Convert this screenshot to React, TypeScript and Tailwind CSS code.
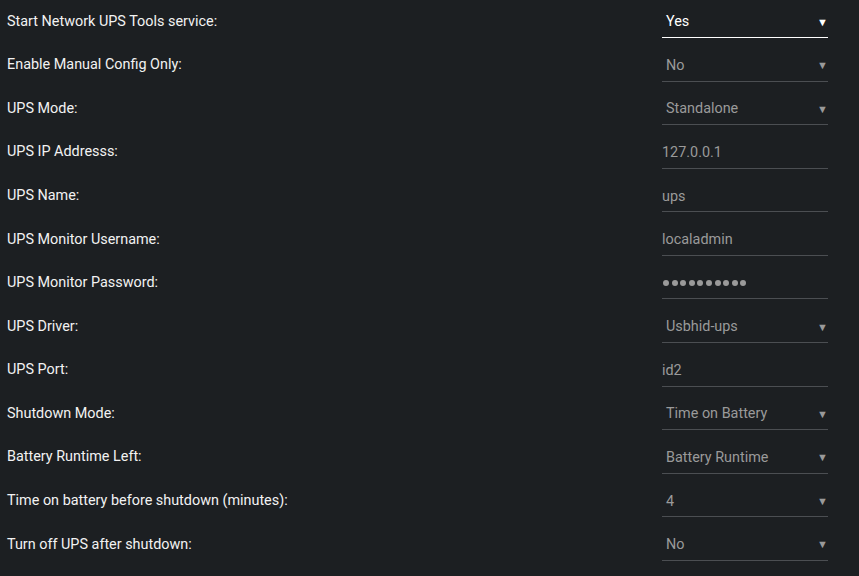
const rows: { label: string; value: string; select?: boolean; active?: boolean }[] = [
  { label: "Start Network UPS Tools service:", value: "Yes", select: true, active: true },
  { label: "Enable Manual Config Only:", value: "No", select: true },
  { label: "UPS Mode:", value: "Standalone", select: true },
  { label: "UPS IP Addresss:", value: "127.0.0.1" },
  { label: "UPS Name:", value: "ups" },
  { label: "UPS Monitor Username:", value: "localadmin" },
  { label: "UPS Monitor Password:", value: "password" },
  { label: "UPS Driver:", value: "Usbhid-ups", select: true },
  { label: "UPS Port:", value: "id2" },
  { label: "Shutdown Mode:", value: "Time on Battery", select: true },
  { label: "Battery Runtime Left:", value: "Battery Runtime", select: true },
  { label: "Time on battery before shutdown (minutes):", value: "4", select: true },
  { label: "Turn off UPS after shutdown:", value: "No", select: true },
];

const Dots = () => (
  <div className="flex gap-[2.6px] pl-[1px]">
    {Array.from({ length: 10 }).map((_, i) => (
      <span key={i} className="w-[6px] h-[6px] rounded-full bg-[#9a9a9a]" />
    ))}
  </div>
);

const Field = ({ value, select, active }: { value: string; select?: boolean; active?: boolean }) => (
  <div
    className={`flex items-center h-[35px] w-[166px] pt-[4px] border-b ${
      active ? "border-white text-white" : "border-[#4b4e52] text-[#9a9a9a]"
    } ${select ? "pl-1" : ""}`}
  >
    <span className="flex-1">{value === "password" ? <Dots /> : value}</span>
    {select && <span className="text-[11px] leading-none">▼</span>}
  </div>
);

export default function App() {
  return (
    <div className="w-[859px] h-[576px] bg-[#1c1f22] text-[#f2f2f2] text-[14.4px] font-['Roboto','Liberation_Sans',sans-serif] overflow-hidden">
      {rows.map((r) => (
        <div key={r.label} className="flex items-start h-[43.58px] pl-[7px]">
          <div className="w-[655px] h-[35px] flex items-center pt-[8px]">{r.label}</div>
          <div className="pt-[3px]">
            <Field value={r.value} select={r.select} active={r.active} />
          </div>
        </div>
      ))}
    </div>
  );
}
